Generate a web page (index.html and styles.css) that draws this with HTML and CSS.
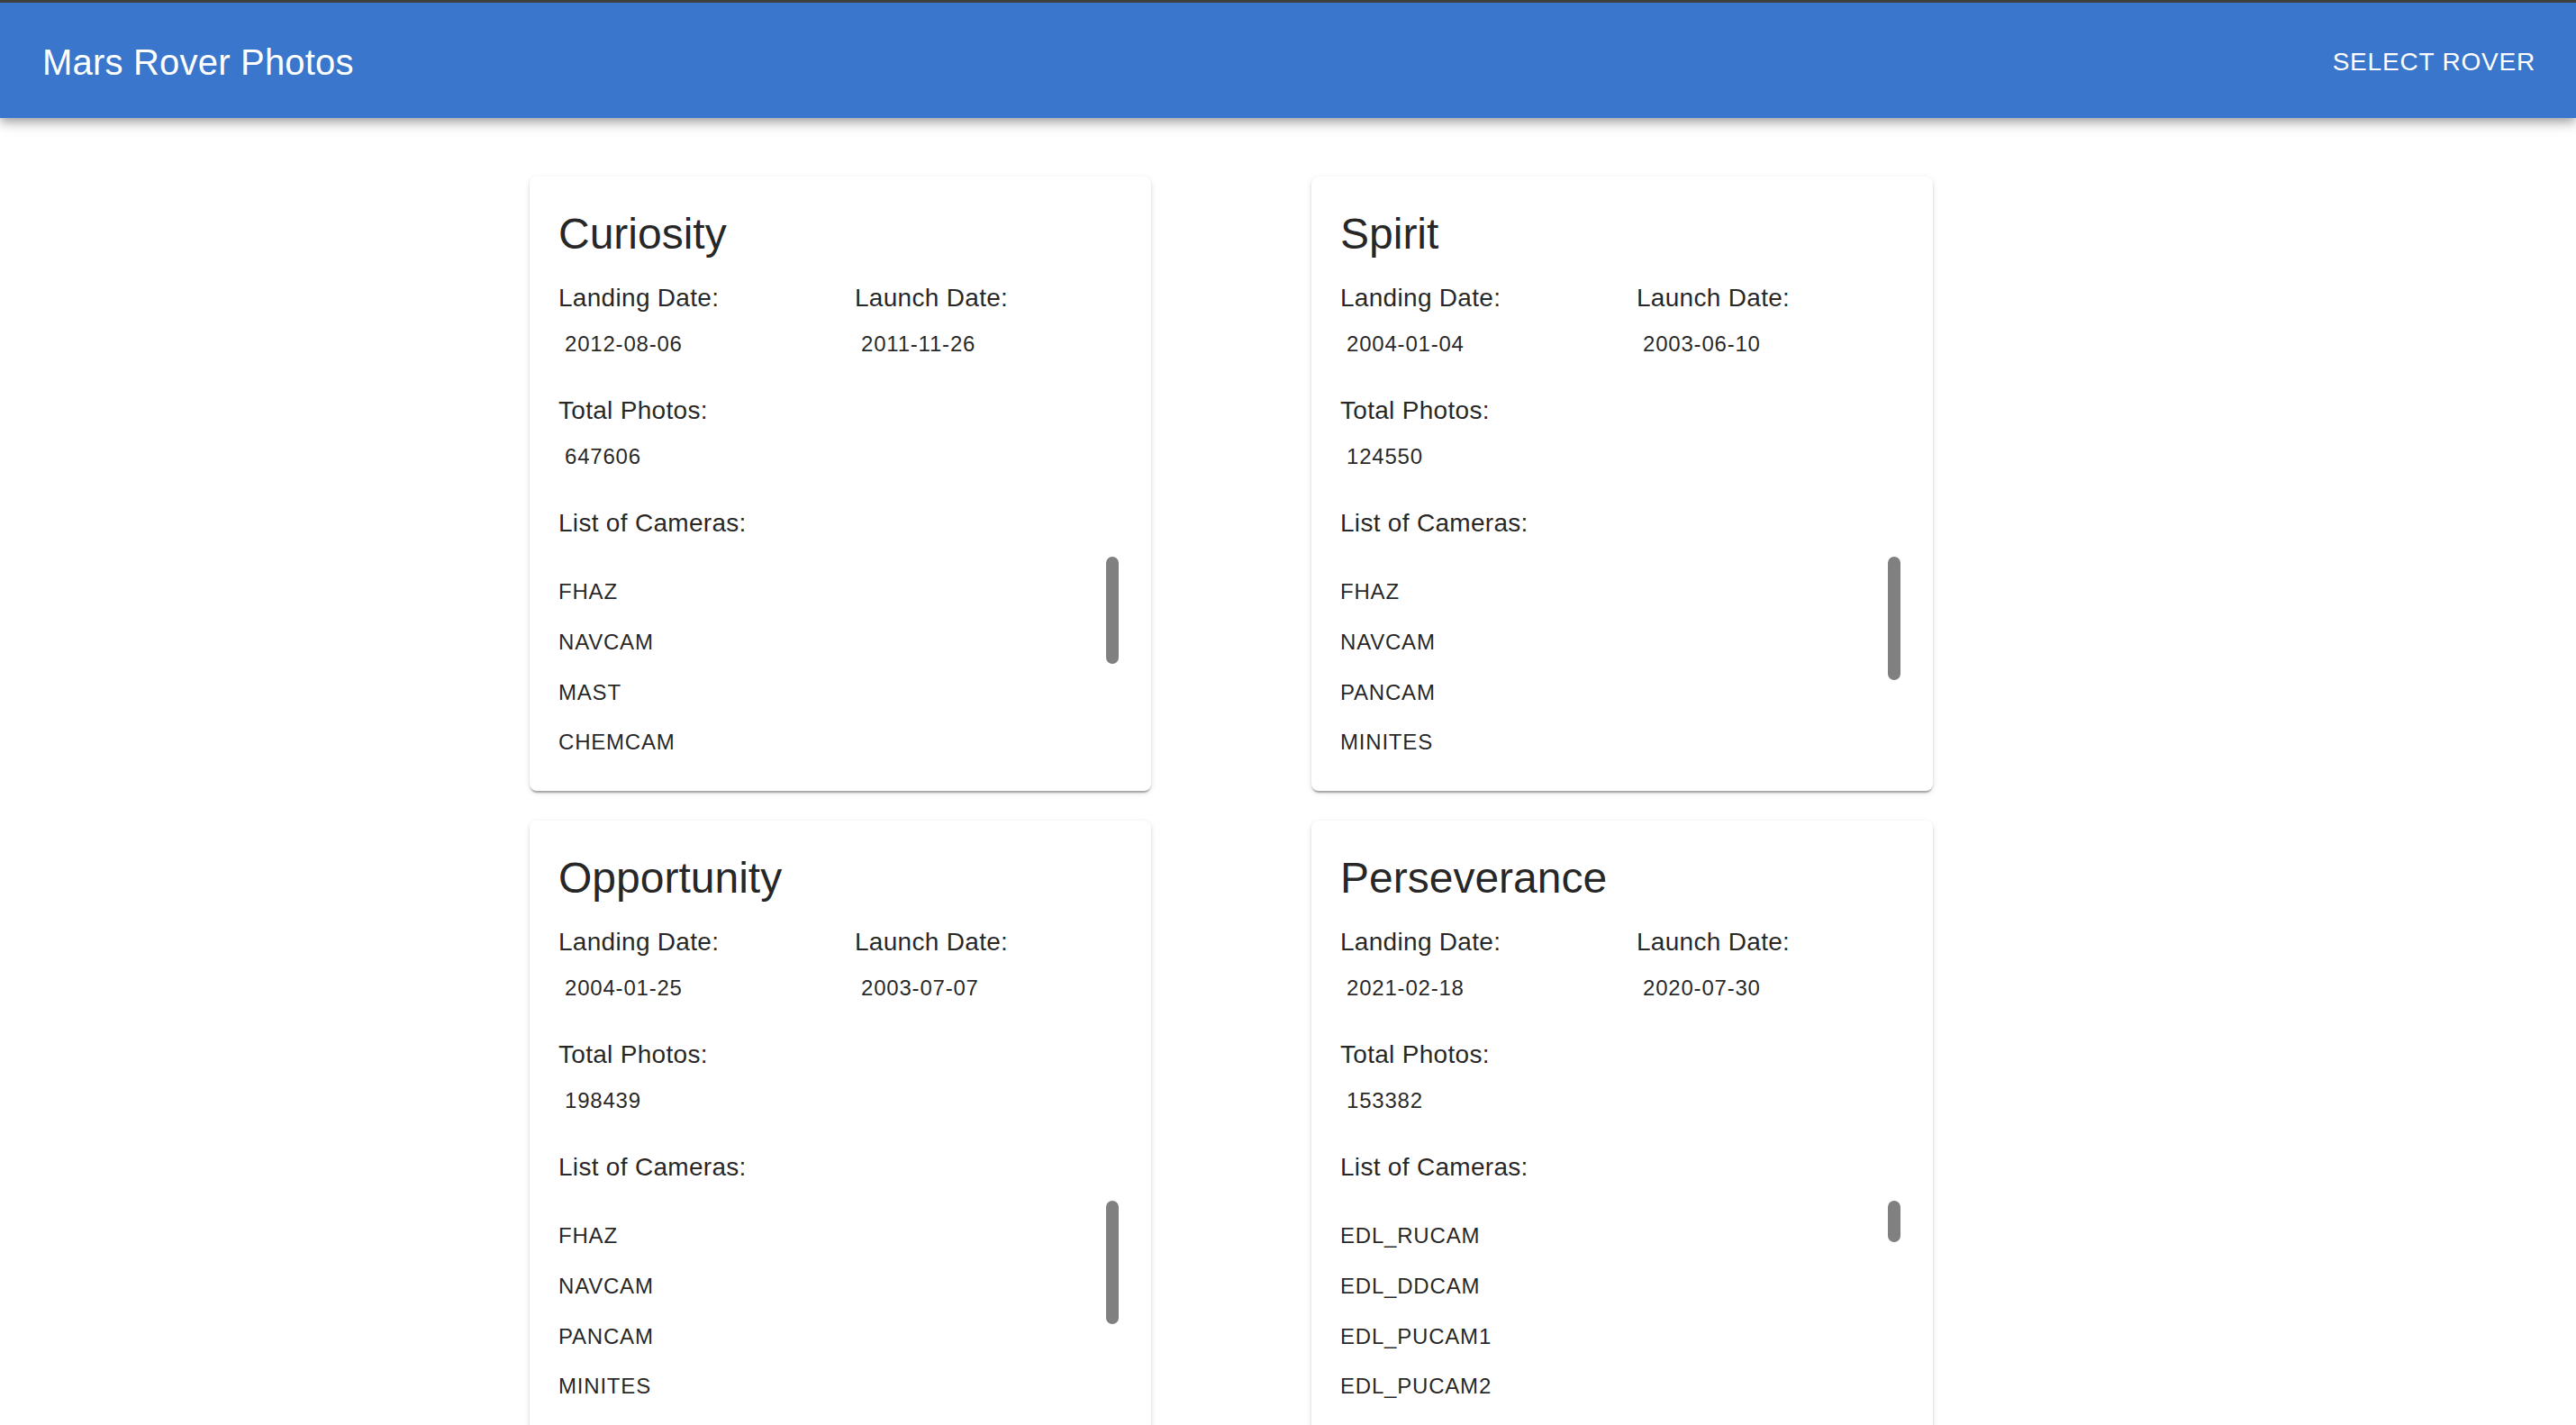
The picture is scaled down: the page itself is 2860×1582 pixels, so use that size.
FILE: index.html
```html
<!DOCTYPE html>
<html lang="en">
<head>
<meta charset="utf-8">
<title>Mars Rover Photos</title>
<link rel="stylesheet" href="styles.css">
</head>
<body>
<header class="appbar">
  <div class="toolbar">
    <h1 class="brand">Mars Rover Photos</h1>
    <button class="nav-btn" type="button">Select Rover</button>
  </div>
</header>
<main class="page">
  <div class="rover-grid">
    <article class="rover-card">
      <h2 class="rover-name">Curiosity</h2>
      <div class="facts">
        <div class="fact"><div class="fact-label">Landing Date:</div><div class="fact-value">2012-08-06</div></div>
        <div class="fact"><div class="fact-label">Launch Date:</div><div class="fact-value">2011-11-26</div></div>
        <div class="fact"><div class="fact-label">Total Photos:</div><div class="fact-value">647606</div></div>
      </div>
      <div class="fact-label">List of Cameras:</div>
      <div class="camera-scroll">
        <ul class="camera-list">
          <li>FHAZ</li><li>NAVCAM</li><li>MAST</li><li>CHEMCAM</li><li>MAHLI</li><li>MARDI</li><li>RHAZ</li>
        </ul>
        <span class="scroll-thumb" style="height:119px"></span>
      </div>
    </article>
    <article class="rover-card">
      <h2 class="rover-name">Spirit</h2>
      <div class="facts">
        <div class="fact"><div class="fact-label">Landing Date:</div><div class="fact-value">2004-01-04</div></div>
        <div class="fact"><div class="fact-label">Launch Date:</div><div class="fact-value">2003-06-10</div></div>
        <div class="fact"><div class="fact-label">Total Photos:</div><div class="fact-value">124550</div></div>
      </div>
      <div class="fact-label">List of Cameras:</div>
      <div class="camera-scroll">
        <ul class="camera-list">
          <li>FHAZ</li><li>NAVCAM</li><li>PANCAM</li><li>MINITES</li><li>ENTRY</li><li>RHAZ</li>
        </ul>
        <span class="scroll-thumb" style="height:137px"></span>
      </div>
    </article>
    <article class="rover-card">
      <h2 class="rover-name">Opportunity</h2>
      <div class="facts">
        <div class="fact"><div class="fact-label">Landing Date:</div><div class="fact-value">2004-01-25</div></div>
        <div class="fact"><div class="fact-label">Launch Date:</div><div class="fact-value">2003-07-07</div></div>
        <div class="fact"><div class="fact-label">Total Photos:</div><div class="fact-value">198439</div></div>
      </div>
      <div class="fact-label">List of Cameras:</div>
      <div class="camera-scroll">
        <ul class="camera-list">
          <li>FHAZ</li><li>NAVCAM</li><li>PANCAM</li><li>MINITES</li><li>ENTRY</li><li>RHAZ</li>
        </ul>
        <span class="scroll-thumb" style="height:137px"></span>
      </div>
    </article>
    <article class="rover-card">
      <h2 class="rover-name">Perseverance</h2>
      <div class="facts">
        <div class="fact"><div class="fact-label">Landing Date:</div><div class="fact-value">2021-02-18</div></div>
        <div class="fact"><div class="fact-label">Launch Date:</div><div class="fact-value">2020-07-30</div></div>
        <div class="fact"><div class="fact-label">Total Photos:</div><div class="fact-value">153382</div></div>
      </div>
      <div class="fact-label">List of Cameras:</div>
      <div class="camera-scroll">
        <ul class="camera-list">
          <li>EDL_RUCAM</li><li>EDL_DDCAM</li><li>EDL_PUCAM1</li><li>EDL_PUCAM2</li><li>NAVCAM_LEFT</li>
          <li>NAVCAM_RIGHT</li><li>MCZ_RIGHT</li><li>MCZ_LEFT</li><li>FRONT_HAZCAM_LEFT_A</li><li>FRONT_HAZCAM_RIGHT_A</li>
          <li>REAR_HAZCAM_LEFT</li><li>REAR_HAZCAM_RIGHT</li><li>SKYCAM</li><li>SHERLOC_WATSON</li><li>SUPERCAM_RMI</li>
          <li>LCAM</li><li>CACHECAM</li><li>PIXL_MCC</li><li>SHERLOC_ACI</li>
        </ul>
        <span class="scroll-thumb" style="height:46px"></span>
      </div>
    </article>
  </div>
</main>
</body>
</html>
```
FILE: styles.css
```css
html {
  scrollbar-width: none;
}

body {
  margin: 0;
  background: #ffffff;
  font-family: "Liberation Sans", Arial, Helvetica, sans-serif;
  color: rgba(0, 0, 0, 0.87);
}

.appbar {
  position: relative;
  z-index: 2;
  background: #3976cc;
  border-top: 3px solid #3f3f3f;
  box-shadow: 0 4px 8px -2px rgba(0, 0, 0, 0.2), 0 8px 10px 0 rgba(0, 0, 0, 0.14), 0 2px 20px 0 rgba(0, 0, 0, 0.12);
}

.toolbar {
  display: flex;
  align-items: center;
  height: 128px;
  padding: 0 29px 0 47px;
}

.brand {
  flex: 1;
  margin: 3px 0 0;
  font-size: 40px;
  font-weight: 400;
  line-height: 64px;
  color: #ffffff;
  letter-spacing: 0.2px;
}

.nav-btn {
  background: none;
  border: 0;
  padding: 12px 16px;
  font-family: inherit;
  font-size: 28px;
  line-height: 49px;
  letter-spacing: 0.8px;
  text-transform: uppercase;
  color: #ffffff;
  margin-top: 2px;
}

.page {
  padding-top: 65px;
}

.rover-grid {
  display: grid;
  grid-template-columns: 836px 836px;
  column-gap: 32px;
  row-gap: 33px;
  margin-left: 588px;
  align-items: start;
}

.rover-card {
  width: 690px;
  box-sizing: border-box;
  padding: 32px 32px 33px;
  background: #ffffff;
  border-radius: 8px;
  box-shadow: 0 4px 2px -2px rgba(0, 0, 0, 0.2), 0 2px 2px 0 rgba(0, 0, 0, 0.14), 0 2px 6px 0 rgba(0, 0, 0, 0.12);
}

.rover-name {
  margin: 0 0 19px;
  font-size: 48px;
  font-weight: 400;
  line-height: 64px;
}

.facts {
  display: grid;
  grid-template-columns: 297px 297px;
  column-gap: 32px;
  row-gap: 34px;
  margin-bottom: 34px;
}

.fact-label {
  font-size: 28px;
  line-height: 40px;
  letter-spacing: 0.3px;
}

.fact-label + .fact-value {
  margin-top: 11px;
}

.fact-value {
  padding-left: 7px;
  font-size: 24px;
  line-height: 40px;
  letter-spacing: 0.8px;
}

.camera-scroll {
  position: relative;
  margin-top: 12px;
}

.camera-list {
  list-style: none;
  margin: 0;
  padding: 16px 0;
  height: 232px;
  box-sizing: border-box;
  overflow-y: auto;
}

.camera-list li {
  padding: 8px 0;
  font-size: 24px;
  line-height: 1.66;
  letter-spacing: 0.8px;
}

.scroll-thumb {
  position: absolute;
  top: 5px;
  right: 4px;
  width: 14px;
  border-radius: 7px;
  background: #808080;
}
```
